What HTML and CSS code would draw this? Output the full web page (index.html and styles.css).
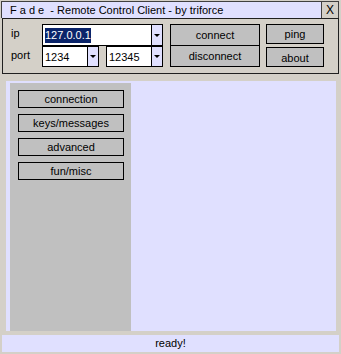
FILE: index.html
```html
<!DOCTYPE html>
<html>
<head>
    <title>Fade - Remote Control Client</title>
    <link rel="stylesheet" href="styles.css">
</head>
<body>
    <div class="window">
        <div class="titlebar">
            <div class="title">F a d e &nbsp;- Remote Control Client - by triforce</div>
            <div class="close">X</div>
        </div>
        <div class="panel">
            <div class="fields">
                <div class="field-row">
                    <span class="label">ip</span>
                    <div class="combo combo-ip">
                        <span class="combo-value"><span class="selected">127.0.0.1</span></span>
                        <span class="combo-arrow"></span>
                    </div>
                </div>
                <div class="field-row">
                    <span class="label">port</span>
                    <div class="combo combo-port">
                        <span class="combo-value">1234</span>
                        <span class="combo-arrow"></span>
                    </div>
                    <div class="combo combo-port second">
                        <span class="combo-value">12345</span>
                        <span class="combo-arrow"></span>
                    </div>
                </div>
            </div>
            <div class="connect-group">
                <div class="btn connect">connect</div>
                <div class="btn disconnect">disconnect</div>
            </div>
            <div class="side-group">
                <div class="btn small">ping</div>
                <div class="btn small">about</div>
            </div>
        </div>
        <div class="content">
            <div class="sidebar">
                <div class="btn nav">connection</div>
                <div class="btn nav">keys/messages</div>
                <div class="btn nav">advanced</div>
                <div class="btn nav">fun/misc</div>
            </div>
            <div class="main"></div>
        </div>
        <div class="status">ready!</div>
    </div>
</body>
</html>
```

FILE: styles.css
```css
body {
    font-family: "Liberation Sans", Arial, sans-serif;
    font-size: 11px;
    color: #000;
    background-color: #d4d0c8;
    margin: 0;
    padding: 0;
}

.window {
    width: 341px;
    height: 354px;
    box-sizing: border-box;
    padding: 1px 2px 2px 2px;
    display: flex;
    flex-direction: column;
}

.titlebar {
    display: flex;
    height: 17px;
    margin-left: -1px;
}

.title {
    flex: 1;
    background-color: #e0e0ff;
    border: 1px solid #404040;
    border-bottom: none;
    padding-left: 8px;
    line-height: 16px;
}

.close {
    width: 16px;
    border: 1px solid #404040;
    border-left: none;
    border-bottom: none;
    text-align: center;
    line-height: 16px;
    font-size: 12px;
}

.panel {
    display: flex;
    height: 56px;
    box-sizing: border-box;
    border: 1px solid #202020;
    padding-top: 5px;
    width: 337px;
}

.fields {
    width: 160px;
}

.field-row {
    display: flex;
    align-items: center;
    height: 22px;
}

.field-row + .field-row {
    height: 21px;
}

.label {
    width: 39px;
    padding-left: 8px;
    box-sizing: border-box;
    position: relative;
    top: -2px;
}

.combo {
    display: flex;
    height: 100%;
    box-sizing: border-box;
    border: 1px solid #000;
    background-color: #fff;
}

.combo-ip {
    width: 121px;
}

.combo-port {
    width: 57px;
}

.combo-port.second {
    margin-left: 7px;
}

.combo-value {
    flex: 1;
    padding-left: 2px;
    display: flex;
    align-items: center;
}

.selected {
    background-color: #0a246a;
    color: #fff;
    padding: 1px 0;
    line-height: 13px;
}

.combo-arrow {
    width: 10px;
    border-left: 1px solid #000;
    background-color: #e0e0ff;
    display: flex;
    align-items: center;
    justify-content: center;
}

.combo-arrow::after {
    content: "";
    border-left: 3px solid transparent;
    border-right: 3px solid transparent;
    border-top: 3px solid #000;
}

.btn {
    background-color: #c0c0c0;
    border: 1px solid #000;
    box-sizing: border-box;
    text-align: center;
}

.connect-group {
    margin-left: 7px;
    width: 90px;
    height: 43px;
    display: flex;
    flex-direction: column;
    border: 1px solid #000;
    box-sizing: border-box;
}

.connect-group .btn {
    border: none;
    flex: 1;
    line-height: 20px;
}

.connect-group .disconnect {
    border-top: 1px solid #000;
}

.side-group {
    margin-left: 6px;
    width: 58px;
    display: flex;
    flex-direction: column;
    justify-content: space-between;
    height: 43px;
}

.btn.small {
    height: 20px;
    line-height: 18px;
}

.btn.small + .btn.small {
    line-height: 20px;
}

.content {
    flex: 1;
    margin: 7px 3px 0 4px;
    background-color: #e0e0ff;
    display: flex;
    padding: 2px 0 0 4px;
}

.sidebar {
    width: 121px;
    background-color: #c0c0c0;
    padding: 7px 0 0 8px;
    box-sizing: border-box;
    display: flex;
    flex-direction: column;
    gap: 6px;
}

.btn.nav {
    width: 106px;
    height: 18px;
    line-height: 16px;
}

.main {
    flex: 1;
}

.status {
    margin-top: 4px;
    height: 17px;
    background-color: #e0e0ff;
    text-align: center;
    line-height: 17px;
}
```
